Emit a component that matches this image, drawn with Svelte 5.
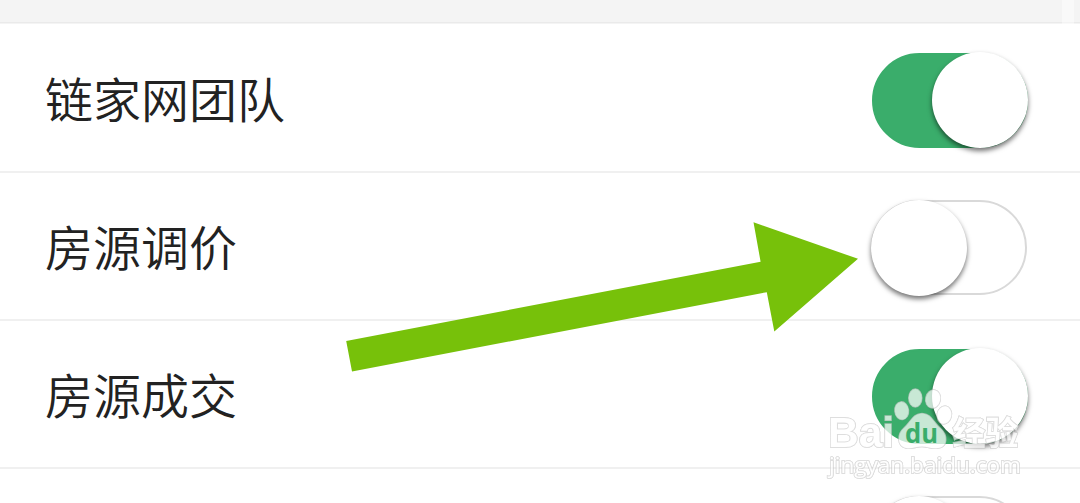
<script>
    let settings = [
        { name: "链家网团队", on: true },
        { name: "房源调价", on: false },
        { name: "房源成交", on: true },
        { name: "", on: false },
    ];

    const toggle = (item) => {
        item.on = !item.on;
        settings = settings;
    };
</script>

<div class="screen">
    <div class="header"><span class="scroll"></span></div>
    <div class="list">
        {#each settings as item}
            <div class="row">
                <span class="name">{item.name}</span>
                <button
                    class="switch"
                    class:on={item.on}
                    role="switch"
                    aria-checked={item.on}
                    aria-label={item.name}
                    on:click={() => toggle(item)}
                >
                    <span class="knob"></span>
                </button>
            </div>
        {/each}
    </div>

    <svg class="arrow" viewBox="0 0 1080 503">
        <path d="M346.2 341 L760.6 261.7 L753.5 222.3 L858 258.8 L774.3 331.5 L766.8 292.2 L352 371.5 Z" />
    </svg>

    <svg class="watermark" viewBox="0 0 220 100">
        <g class="mark">
            <text x="13" y="60" font-size="43" textLength="66" lengthAdjust="spacingAndGlyphs" class="bold">Bai</text>
            <ellipse cx="86.7" cy="23.7" rx="6.8" ry="8.8" transform="rotate(-6 86.7 23.7)" />
            <ellipse cx="100.3" cy="11" rx="6.5" ry="9" />
            <ellipse cx="118" cy="12" rx="7.2" ry="9" transform="rotate(12 118 12)" />
            <ellipse cx="129.3" cy="28" rx="7" ry="8.8" transform="rotate(10 129.3 28)" />
            <path d="M107 26.5 C116 26.5 118 35 125 41 C133 48 133 60 123 61 C116 62 112 59.5 107 59.5 C101 59.5 97 62 91 61 C82 59 82 47 89 41 C96 35 98 26.5 107 26.5 Z" />
            <text x="137.5" y="58" font-size="33" textLength="66" lengthAdjust="spacingAndGlyphs" class="bold">经验</text>
            <text x="14" y="86" font-size="21" textLength="192" lengthAdjust="spacingAndGlyphs" class="url">jingyan.baidu.com</text>
        </g>
        <text x="90" y="55.5" font-size="26" textLength="33" lengthAdjust="spacingAndGlyphs" class="du">du</text>
    </svg>
</div>

<style>
    :global(body) {
        background: #fff;
        overflow: hidden;
    }

    .screen {
        position: relative;
        width: 1080px;
        height: 503px;
        overflow: hidden;
        background: #fff;
        font-family: "Noto Sans CJK SC", sans-serif;
    }

    .header {
        display: flex;
        justify-content: flex-end;
        box-sizing: border-box;
        height: 24px;
        padding-right: 6px;
        background: linear-gradient(#f4f4f4 22px, #eaeaea 22px, #eaeaea 23px, #f4f4f4 23px);
    }

    .scroll {
        width: 12px;
        background: rgba(255, 255, 255, 0.45);
    }

    .list {
        padding-top: 1px;
    }

    .row {
        display: flex;
        align-items: center;
        justify-content: space-between;
        box-sizing: border-box;
        height: 148px;
        padding: 4px 52px 0 45px;
        border-bottom: 2px solid #f0f0f0;
    }

    .name {
        padding-bottom: 6px;
        color: #222;
        font-size: 48px;
        font-weight: 350;
        line-height: 70px;
    }

    .switch {
        display: flex;
        align-items: center;
        box-sizing: border-box;
        width: 156px;
        height: 95px;
        margin: 0 1px 1px 0;
        padding: 0;
        border: 2px solid #d9d9d9;
        border-radius: 48px;
        background: #fff;
        cursor: pointer;
    }

    .switch.on {
        justify-content: flex-end;
        margin: 0;
        border-color: #3aad6b;
        background: #3aad6b;
    }

    .knob {
        flex: none;
        width: 96px;
        height: 96px;
        margin: 0 -2px;
        border-radius: 50%;
        background: #fff;
        box-shadow: 0 3px 5px rgba(0, 0, 0, 0.55);
    }

    .arrow {
        position: absolute;
        inset: 0;
        width: 1080px;
        height: 503px;
        fill: #77c10a;
        pointer-events: none;
    }

    .watermark {
        position: absolute;
        left: 815px;
        top: 387px;
        width: 220px;
        height: 100px;
        pointer-events: none;
    }

    .mark {
        fill: #fff;
        stroke: #d2d2d2;
        stroke-width: 1.6px;
        paint-order: stroke;
        opacity: 0.72;
        filter: drop-shadow(0 0 0.6px rgba(0, 0, 0, 0.25));
    }

    .bold {
        font-family: "Liberation Sans", "Noto Sans CJK SC", sans-serif;
        font-weight: bold;
    }

    .url {
        font-family: "Open Sans", sans-serif;
        font-weight: 500;
    }

    .du {
        fill: #3aad6b;
        font-family: "Open Sans", sans-serif;
        font-weight: 700;
    }
</style>
